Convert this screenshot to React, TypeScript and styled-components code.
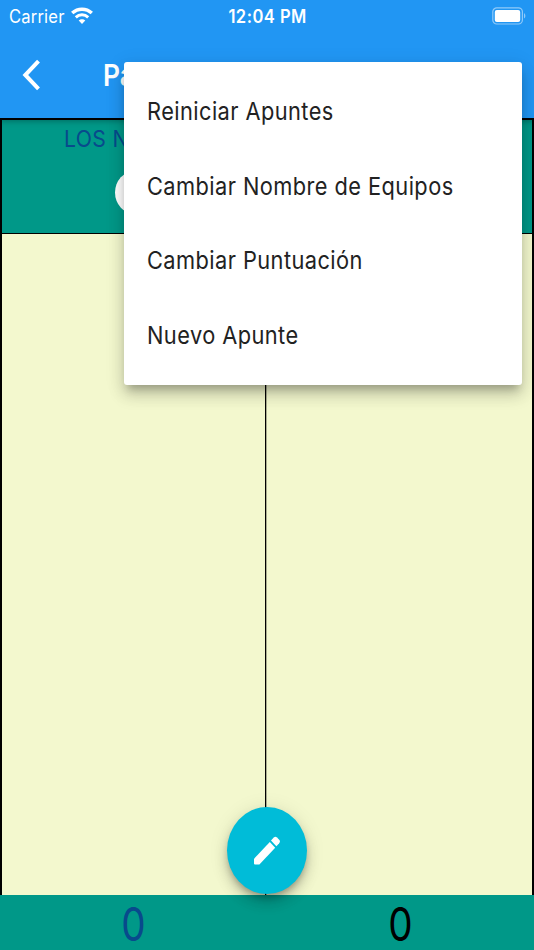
import React from "react";
import styled, { createGlobalStyle } from "styled-components";

const GlobalStyle = createGlobalStyle`
  * { box-sizing: border-box; }
  body { margin: 0; font-family: Inter, "Liberation Sans", sans-serif; }
`;

const Screen = styled.main`
  position: relative;
  display: flex;
  flex-direction: column;
  width: 534px;
  height: 950px;
  overflow: hidden;
  background: #f3f8ce;
`;

const Header = styled.header`
  position: relative;
  z-index: 1;
  flex: none;
  height: 118px;
  background: #2196f3;
  color: #fff;
  box-shadow: 0 3px 6px rgba(0, 0, 0, 0.3);
`;

const StatusBar = styled.div`
  display: grid;
  grid-template-columns: 1fr auto 1fr;
  align-items: center;
  height: 32px;
  padding: 0 8px 0 9px;
`;

const Carrier = styled.div`
  display: flex;
  align-items: center;
  gap: 7px;
`;

const Label = styled.span<{ $size: number; $stretch: number; $weight?: number; $spacing?: number; $origin?: string }>`
  display: block;
  white-space: nowrap;
  font-size: ${(p) => p.$size}px;
  font-weight: ${(p) => p.$weight ?? 400};
  letter-spacing: ${(p) => p.$spacing ?? 0}px;
  transform: scaleX(${(p) => p.$stretch});
  transform-origin: ${(p) => p.$origin ?? "left"} center;
`;

const CarrierName = styled.div`
  width: 55px;
`;

const Battery = styled.svg`
  justify-self: end;
`;

const Toolbar = styled.div`
  display: flex;
  align-items: center;
  height: 86px;
  padding-left: 22px;
`;

const Title = styled.h1`
  margin: 0 0 0 61px;
  line-height: 36px;
`;

const Teams = styled.section`
  display: grid;
  grid-template-columns: 1fr 1fr;
  flex: none;
  height: 116px;
  background: #009888;
  border: 2px solid #000;
  border-bottom-width: 1px;
`;

const Team = styled.div`
  display: flex;
  flex-direction: column;
  align-items: center;
  padding-top: 5px;
  color: #084a8c;
`;

const TeamName = styled.div`
  align-self: flex-start;
  margin-left: 62px;
  line-height: 28px;
`;

const Marker = styled.div`
  width: 40px;
  height: 43px;
  margin-top: 18px;
  border-radius: 50%;
  background: #fff;
`;

const Board = styled.section`
  display: grid;
  grid-template-columns: 263px 1fr;
  flex: 1;
  border: solid #000;
  border-width: 0 2px;
`;

const Column = styled.div`
  & + & {
    border-left: 1px solid #000;
    box-shadow: inset 1px 0 rgba(0, 0, 0, 0.3);
  }
`;

const Totals = styled.footer`
  display: grid;
  grid-template-columns: 1fr 1fr;
  flex: none;
  height: 55px;
  background: #009888;
`;

const Total = styled.div<{ $color: string }>`
  display: flex;
  justify-content: center;
  padding-top: 4px;
  color: ${(p) => p.$color};
  line-height: 50px;
`;

const Menu = styled.ul`
  position: absolute;
  z-index: 2;
  top: 62px;
  left: 124px;
  width: 398px;
  height: 323px;
  margin: 0;
  padding: 12px 23px;
  list-style: none;
  background: #fff;
  border-radius: 3px;
  box-shadow: 0 8px 8px -4px rgba(0, 0, 0, 0.22), 0 10px 16px 1px rgba(0, 0, 0, 0.14), 0 4px 20px 2px rgba(0, 0, 0, 0.08);
`;

const MenuItem = styled.li`
  display: flex;
  align-items: center;
  height: 74.5px;
  color: #222;
`;

const EditButton = styled.button`
  position: absolute;
  left: 227px;
  top: 807px;
  display: grid;
  place-items: center;
  width: 80px;
  height: 87px;
  padding: 0;
  border: 0;
  border-radius: 50%;
  background: #00bcd8;
  box-shadow: 0 5px 7px -2px rgba(0, 0, 0, 0.28), 0 9px 14px rgba(0, 0, 0, 0.15), 0 2px 20px rgba(0, 0, 0, 0.1);
`;

const actions = [
  "Reiniciar Apuntes",
  "Cambiar Nombre de Equipos",
  "Cambiar Puntuación",
  "Nuevo Apunte",
];

export default function App() {
  return (
    <Screen>
      <GlobalStyle />
      <Header>
        <StatusBar>
          <Carrier>
            <CarrierName><Label $size={18} $stretch={0.92} $spacing={0.2}>Carrier</Label></CarrierName>
            <svg width="22" height="18" viewBox="0 0 22 18" fill="none" stroke="#fff" strokeWidth="3.4">
              <path d="M1.2 6.1C6.8.9 15.2.9 20.8 6.1" />
              <path d="M4.8 10.3c3.6-3.3 8.8-3.3 12.4 0" strokeWidth="3" />
              <path d="M7.7 13.6c1.8-1.8 4.8-1.8 6.6 0L11 17Z" fill="#fff" stroke="none" />
            </svg>
          </Carrier>
          <Label $size={18} $stretch={0.92} $weight={600} $spacing={0.5} $origin="center">12:04 PM</Label>
          <Battery width="34" height="18" viewBox="0 0 34 18">
            <rect x=".8" y=".8" width="29.6" height="16.2" rx="4" fill="none" stroke="#90caf9" strokeWidth="1.2" />
            <rect x="2.8" y="2.9" width="25.4" height="12" rx="2" fill="#fff" />
            <path d="M32 6.2c1.8.5 1.8 4.7 0 5.2Z" fill="#90caf9" />
          </Battery>
        </StatusBar>
        <Toolbar>
          <svg width="20" height="32" viewBox="0 0 20 32" fill="none" stroke="#fff" strokeWidth="4">
            <path d="M16.5 2.2 3.3 16l13.2 13.8" />
          </svg>
          <Title><Label $size={30} $stretch={0.88} $weight={600}>Partida de Dominó</Label></Title>
        </Toolbar>
      </Header>
      <Teams>
        <Team>
          <TeamName><Label $size={23.5} $stretch={0.9} $spacing={0.4}>LOS NUESTRO</Label></TeamName>
          <Marker />
        </Team>
      </Teams>
      <Board>
        <Column />
        <Column />
      </Board>
      <Totals>
        <Total $color="#084a8c"><Label $size={46} $stretch={0.84} $origin="center">0</Label></Total>
        <Total $color="#000"><Label $size={46} $stretch={0.84} $origin="center">0</Label></Total>
      </Totals>
      <Menu>
        {actions.map((action) => (
          <MenuItem key={action}>
            <Label $size={24.5} $stretch={0.89} $spacing={0.48}>{action}</Label>
          </MenuItem>
        ))}
      </Menu>
      <EditButton aria-label="Editar">
        <svg width="27" height="29" viewBox="0 0 27 29" fill="#fff">
          <path d="M0 22.8 15.8 5.9l5.4 5.8L5.4 28.5H1q-1 0-1-1Z" />
          <path d="m17 4.5 2.8-3q1.6-1.6 3.2 0l2.2 2.3q1.5 1.7 0 3.4l-2.8 3Z" />
        </svg>
      </EditButton>
    </Screen>
  );
}
